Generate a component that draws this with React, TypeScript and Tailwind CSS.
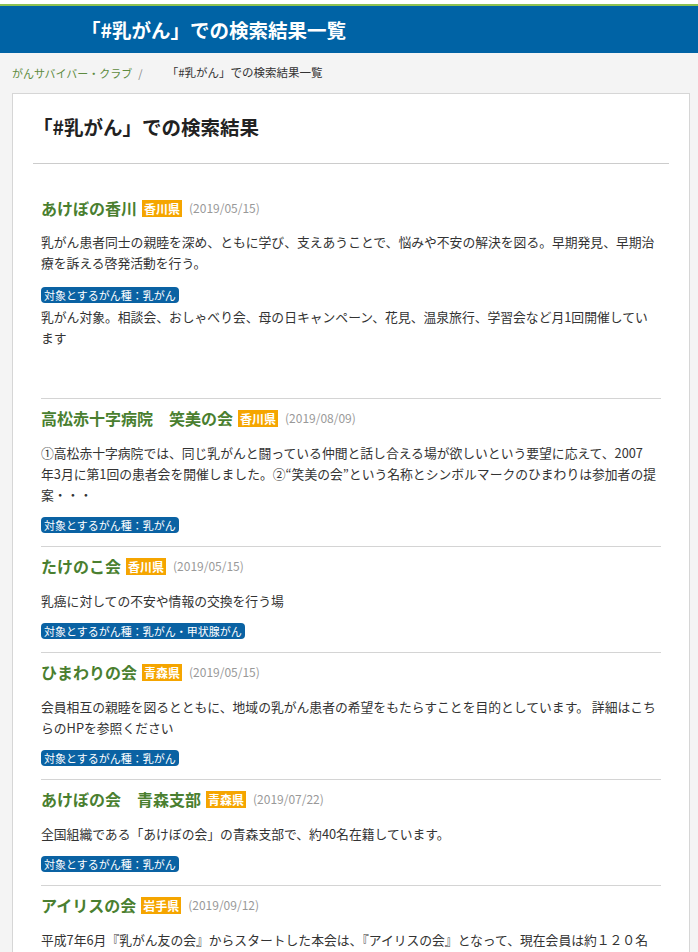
import React from 'react';

type Item = {
  name: string;
  pref: string;
  date: string;
  desc: string[];
  tag: string;
  extra?: string[];
};

const items: Item[] = [
  {
    name: 'あけぼの香川',
    pref: '香川県',
    date: '(2019/05/15)',
    desc: [
      '乳がん患者同士の親睦を深め、ともに学び、支えあうことで、悩みや不安の解決を図る。早期発見、早期治',
      '療を訴える啓発活動を行う。',
    ],
    tag: '対象とするがん種：乳がん',
    extra: [
      '乳がん対象。相談会、おしゃべり会、母の日キャンペーン、花見、温泉旅行、学習会など月1回開催してい',
      'ます',
    ],
  },
  {
    name: '高松赤十字病院　笑美の会',
    pref: '香川県',
    date: '(2019/08/09)',
    desc: [
      '①高松赤十字病院では、同じ乳がんと闘っている仲間と話し合える場が欲しいという要望に応えて、2007',
      '年3月に第1回の患者会を開催しました。②“笑美の会”という名称とシンボルマークのひまわりは参加者の提',
      '案・・・',
    ],
    tag: '対象とするがん種：乳がん',
  },
  {
    name: 'たけのこ会',
    pref: '香川県',
    date: '(2019/05/15)',
    desc: ['乳癌に対しての不安や情報の交換を行う場'],
    tag: '対象とするがん種：乳がん・甲状腺がん',
  },
  {
    name: 'ひまわりの会',
    pref: '青森県',
    date: '(2019/05/15)',
    desc: [
      '会員相互の親睦を図るとともに、地域の乳がん患者の希望をもたらすことを目的としています。 詳細はこち',
      'らのHPを参照ください',
    ],
    tag: '対象とするがん種：乳がん',
  },
  {
    name: 'あけぼの会　青森支部',
    pref: '青森県',
    date: '(2019/07/22)',
    desc: ['全国組織である「あけぼの会」の青森支部で、約40名在籍しています。'],
    tag: '対象とするがん種：乳がん',
  },
  {
    name: 'アイリスの会',
    pref: '岩手県',
    date: '(2019/09/12)',
    desc: [
      '平成7年6月『乳がん友の会』からスタートした本会は、『アイリスの会』となって、現在会員は約１２０名',
      'で活動しています。',
    ],
    tag: '対象とするがん種：乳がん',
  },
];

function Lines({ lines, className }: { lines: string[]; className: string }) {
  return (
    <p className={className}>
      {lines.map((l, i) => (
        <React.Fragment key={i}>
          {i > 0 && <br />}
          {l}
        </React.Fragment>
      ))}
    </p>
  );
}

function ResultItem({ item, first }: { item: Item; first: boolean }) {
  return (
    <div className={first ? 'pt-[32px] pb-[50px]' : 'border-t border-[#d4d4d4] pt-[7px] pb-[13px]'}>
      <div className="flex items-center h-[24px]">
        <span className="text-[16px] leading-[24px] font-bold text-[#4a7f30]">{item.name}</span>
        <span className="ml-[5px] h-[17px] px-[2px] bg-[#f5a500] text-white text-[12px] leading-[17px] font-bold">
          {item.pref}
        </span>
        <span className="ml-[7px] text-[12px] text-[#999999]">{item.date}</span>
      </div>
      <Lines
        lines={item.desc}
        className={`${first ? 'mt-[11px]' : 'mt-[12px]'} text-[12.8px] leading-[21px] text-[#333333] whitespace-nowrap`}
      />
      <div className={`flex ${first ? 'mt-[14px]' : 'mt-[12px]'}`}>
        <span className="h-[16px] px-[3px] rounded-[4px] bg-[#0a62a3] text-white text-[11px] leading-[16px]">
          {item.tag}
        </span>
      </div>
      {item.extra && (
        <Lines lines={item.extra} className="mt-[3px] text-[12.8px] leading-[21px] text-[#333333] whitespace-nowrap" />
      )}
    </div>
  );
}

export default function App() {
  return (
    <div
      className="min-h-[952px] bg-[#f4f4f4] overflow-hidden"
      style={{ fontFamily: '"Noto Sans CJK JP", "Noto Sans", sans-serif' }}
    >
      <div className="h-[4px] bg-white" />
      <div className="h-[2px] bg-[#8cc152]" />
      <header className="h-[47px] bg-[#0063a5] flex items-center pl-[81px]">
        <h1 className="text-[19.5px] font-bold text-white">「#乳がん」での検索結果一覧</h1>
      </header>

      <nav className="h-[40px] flex items-center px-[12px] text-[11px]">
        <span className="text-[#5e8b40]">がんサバイバー・クラブ</span>
        <span className="ml-[6px] text-[#888888]">/</span>
        <span className="ml-[24px] text-[11.5px] text-[#333333]">「#乳がん」での検索結果一覧</span>
      </nav>

      <main className="ml-[12px] mr-[8px] bg-white border border-[#d6d6d6] px-[20px] pt-[19px]">
        <h2 className="text-[19.5px] leading-[28px] font-bold text-[#222222]">「#乳がん」での検索結果</h2>
        <div className="mt-[22px] border-t border-[#cccccc]" />
        <div className="px-[8px]">
          {items.map((item, i) => (
            <ResultItem key={i} item={item} first={i === 0} />
          ))}
        </div>
      </main>
    </div>
  );
}
